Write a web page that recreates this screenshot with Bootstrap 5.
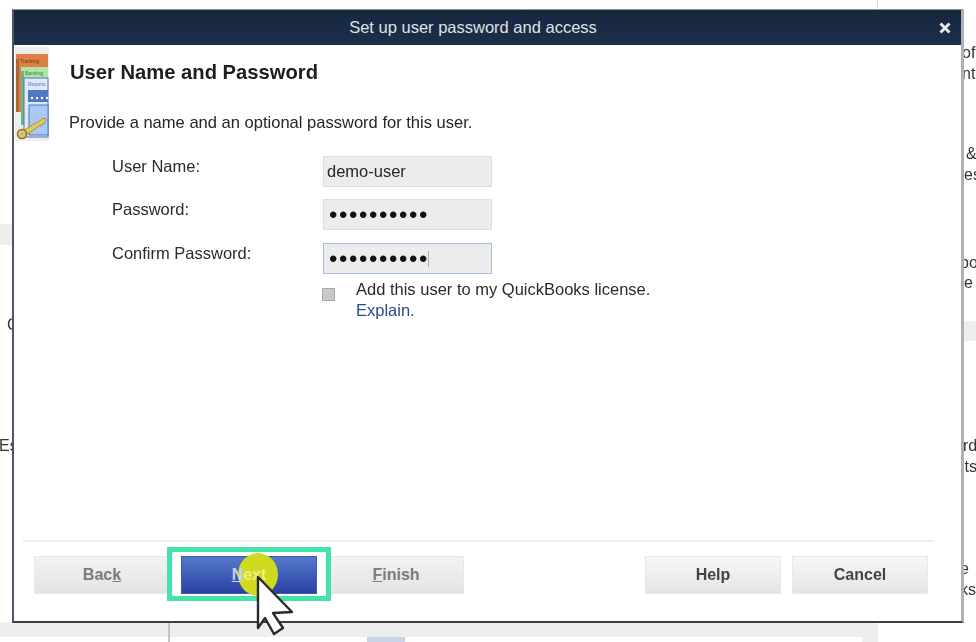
<!DOCTYPE html>
<html lang="en">
<head>
<meta charset="utf-8">
<title>Set up user password and access</title>
<link href="https://cdn.jsdelivr.net/npm/bootstrap@5.3.0/dist/css/bootstrap.min.css" rel="stylesheet">
<style>
html,body{height:100%;margin:0;overflow:hidden;background:#fff}
body{font-family:"Liberation Sans",Arial,sans-serif;color:#222}
.stage{position:relative;width:976px;height:642px;overflow:hidden;filter:blur(.5px)}
.frag{position:absolute;font-size:16px;line-height:20px;color:#333;white-space:nowrap}
.bandg{position:absolute;background:#eeeeee}
.win{position:absolute;left:12px;top:9px;width:952px;height:614px;background:#fff;border-left:2px solid #4c5865;border-right:3px solid #aeb2b7;border-bottom:2px solid #3a3f45;border-top:1px solid #8b96a3}
.tbar{height:35px;background:linear-gradient(#17263d,#1c304b);color:#dfe2e6;font-size:16.5px}
.xclose{position:absolute;right:9px;top:11px;width:14px;height:14px}
.artcol{width:34px;margin-left:1px;margin-top:2px}
.headtxt{font-size:20.2px;font-weight:700;color:#1d1d1d;line-height:24px;margin:0}
.introtxt{font-size:16.55px;line-height:20px;color:#262626;margin:0}
.lbl{width:274px;padding-left:63px;font-size:16.5px;line-height:20px;color:#2b2b2b}
.fieldbox{position:relative;width:169px;height:31px;border:1px solid #dedede;background:#ececec}
.fieldbox.activefield{border-color:#a6bde2}
.fieldbox .form-control{height:29px;background:transparent;border:0;border-radius:0;padding:0 3px;font-family:"Liberation Sans",Arial,sans-serif;font-size:16.5px;color:#262626;box-shadow:none}
.fieldbox .dotfield{font-size:24px;letter-spacing:1.6px;color:#111;line-height:1;padding-left:5px}
.caretbar{position:absolute;left:104px;top:7px;width:1px;height:16px;background:#b0b0b0}
.tick{width:13px;height:13px;background:#c9c9c9;border:1px solid #a9a9a9;margin:9px 0 0}
.licline{font-size:16.5px;line-height:21px;color:#2b2b2b}
.licline a{color:#2c4a8e;text-decoration:none}
.sepline{height:2px;background:#ededed;margin:0 27px 0 9px}
.dbtn{width:136px;height:38px;padding:0;border-radius:0;font-size:16px;font-weight:700;line-height:36px;background:linear-gradient(#f7f7f7,#e5e5e5);border:1px solid #e8e8e8;position:relative}
.dbtn.btn:disabled{opacity:1;color:#7c7c7c;background:linear-gradient(#f3f3f3,#e3e3e3);border-color:#e8e8e8}
.dbtn.actionbtn{color:#444}
.dbtn.nextbtn,.dbtn.nextbtn:hover{background:linear-gradient(#5479c8,#2a3fa6);border-color:#3f5cb5;color:#c6d3ef;z-index:2}
.glow{position:absolute;left:56px;top:-4px;width:40px;height:43px;border-radius:50%;background:#cfd91f}
.nexttext{position:relative}
.nexttext span{color:#eef27a}
.ring{position:absolute;left:167px;top:547px;width:164px;height:54px;border:5px solid #43e3ab;background:#fff;z-index:1}
.ptr{position:absolute;left:250px;top:570px;width:50px;height:72px;z-index:3}
</style>
</head>
<body>
<div class="stage">
  <div class="bandg" style="left:0;top:224px;width:12px;height:21px"></div>
  <div class="bandg" style="left:964px;top:321px;width:12px;height:20px"></div>
  <div class="bandg" style="left:0;top:622px;width:168px;height:15px"></div>
  <div class="bandg" style="left:170px;top:622px;width:708px;height:15px"></div>
  <div class="bandg" style="left:862px;top:637px;width:16px;height:5px"></div>
  <div class="bandg" style="left:168px;top:622px;width:2px;height:20px;background:#c4c4c4"></div>
  <div class="bandg" style="left:877px;top:0;width:1px;height:9px;background:#ddd"></div>
  <div class="bandg" style="left:367px;top:637px;width:38px;height:5px;background:#c9d3ea"></div>
  <span class="frag" style="left:7px;top:315px">C</span>
  <span class="frag" style="left:-1px;top:436px">Es</span>
  <span class="frag" style="left:962px;top:43px">of</span>
  <span class="frag" style="left:962px;top:64px">nt</span>
  <span class="frag" style="left:966px;top:144px">&amp;</span>
  <span class="frag" style="left:964px;top:165px">es</span>
  <span class="frag" style="left:960px;top:253px">bo</span>
  <span class="frag" style="left:964px;top:273px">e</span>
  <span class="frag" style="left:963px;top:436px">rd</span>
  <span class="frag" style="left:961px;top:457px">its</span>
  <span class="frag" style="left:960px;top:559px">e</span>
  <span class="frag" style="left:960px;top:580px">ks</span>

  <div class="win d-flex flex-column">
    <div class="tbar d-flex align-items-center justify-content-center position-relative">
      <span style="margin-right:29px">Set up user password and access</span>
      <svg class="xclose" viewBox="0 0 14 14"><path d="M2.5 2.5l9 9M11.5 2.5l-9 9" stroke="#e6e8ea" stroke-width="3"/></svg>
    </div>
    <div class="d-flex flex-grow-1">
      <div class="artcol flex-shrink-0">
        <svg width="34" height="94" viewBox="0 0 34 94">
          <rect width="34" height="94" fill="#eeeeee"/>
          <rect x="1" y="7" width="32" height="58" fill="#de7f45"/>
          <rect x="1" y="12" width="3" height="53" fill="#a9653a"/>
          <text x="5" y="16" font-size="5" fill="#7a3010" font-family="Liberation Sans">Tracking</text>
          <rect x="6" y="20" width="27" height="58" fill="#aee6a6"/>
          <rect x="6" y="24" width="3" height="54" fill="#6fb67a"/>
          <text x="10" y="28" font-size="5" fill="#3d7a3a" font-family="Liberation Sans">Banking</text>
          <rect x="9" y="31" width="24" height="59" fill="#dfe9fb" stroke="#4a74c4"/>
          <text x="13" y="39" font-size="5" fill="#5a7cc0" font-family="Liberation Sans">Reports</text>
          <rect x="13" y="43" width="20" height="12" fill="#4f78c4"/>
          <circle cx="17" cy="51" r="1.2" fill="#fff"/><circle cx="22" cy="51" r="1.2" fill="#fff"/><circle cx="27" cy="51" r="1.2" fill="#fff"/><circle cx="32" cy="51" r="1.2" fill="#fff"/>
          <rect x="14" y="58" width="19" height="30" fill="#a9c8f4" stroke="#4a74c4"/>
          <path d="M9 83l17-10 2-2 1 1 1-1 1 2-2 4-2 0-1 2-2 0-11 8z" fill="#e0c95e" stroke="#8f7a20" stroke-width=".7"/>
          <circle cx="7" cy="87" r="4.5" fill="#e0c95e" stroke="#8a7428" stroke-width="1.6"/>
          <circle cx="7" cy="87" r="1.6" fill="#b8b09a"/>
        </svg>
      </div>
      <div class="flex-grow-1 d-flex flex-column">
        <div style="padding:15px 0 0 21px">
          <h1 class="headtxt">User Name and Password</h1>
          <p class="introtxt" style="margin-top:29px;margin-left:-1px">Provide a name and an optional password for this user.</p>
        </div>
        <form style="margin-top:23px">
          <div class="d-flex mb-0" style="height:43px">
            <label class="lbl" for="f1">User Name:</label>
            <div class="fieldbox"><input id="f1" class="form-control" value="demo-user"></div>
          </div>
          <div class="d-flex" style="height:44px">
            <label class="lbl" for="f2">Password:</label>
            <div class="fieldbox"><input id="f2" type="password" class="form-control dotfield" value="abcdefghij"></div>
          </div>
          <div class="d-flex" style="height:36px">
            <label class="lbl" for="f3">Confirm Password:</label>
            <div class="fieldbox activefield"><input id="f3" type="password" class="form-control dotfield" value="abcdefghij"><span class="caretbar"></span></div>
          </div>
          <div class="d-flex" style="margin-left:273px">
            <div class="tick flex-shrink-0"></div>
            <div class="licline" style="margin-left:21px">Add this user to my QuickBooks license.<br><a href="#">Explain.</a></div>
          </div>
        </form>
      </div>
    </div>
    <div class="sepline"></div>
    <div class="d-flex" style="padding:14px 33px 27px 20px;">
      <button class="btn dbtn" disabled>Bac<u>k</u></button>
      <button class="btn dbtn nextbtn" style="margin-left:11px"><span class="glow"></span><span class="nexttext"><u>N</u><span>ext</span></span></button>
      <button class="btn dbtn" disabled style="margin-left:11px"><u>F</u>inish</button>
      <button class="btn dbtn actionbtn ms-auto">Help</button>
      <button class="btn dbtn actionbtn" style="margin-left:11px">Cancel</button>
    </div>
  </div>
  <div class="ring"></div>
  <svg class="ptr" viewBox="250 570 50 72"><path d="M258 577L292 612 273 613 283 628 274 634 265 618 258 628Z" fill="#fff" stroke="#2a2a2a" stroke-width="2.4" stroke-linejoin="round"/></svg>
</div>
</body>
</html>
